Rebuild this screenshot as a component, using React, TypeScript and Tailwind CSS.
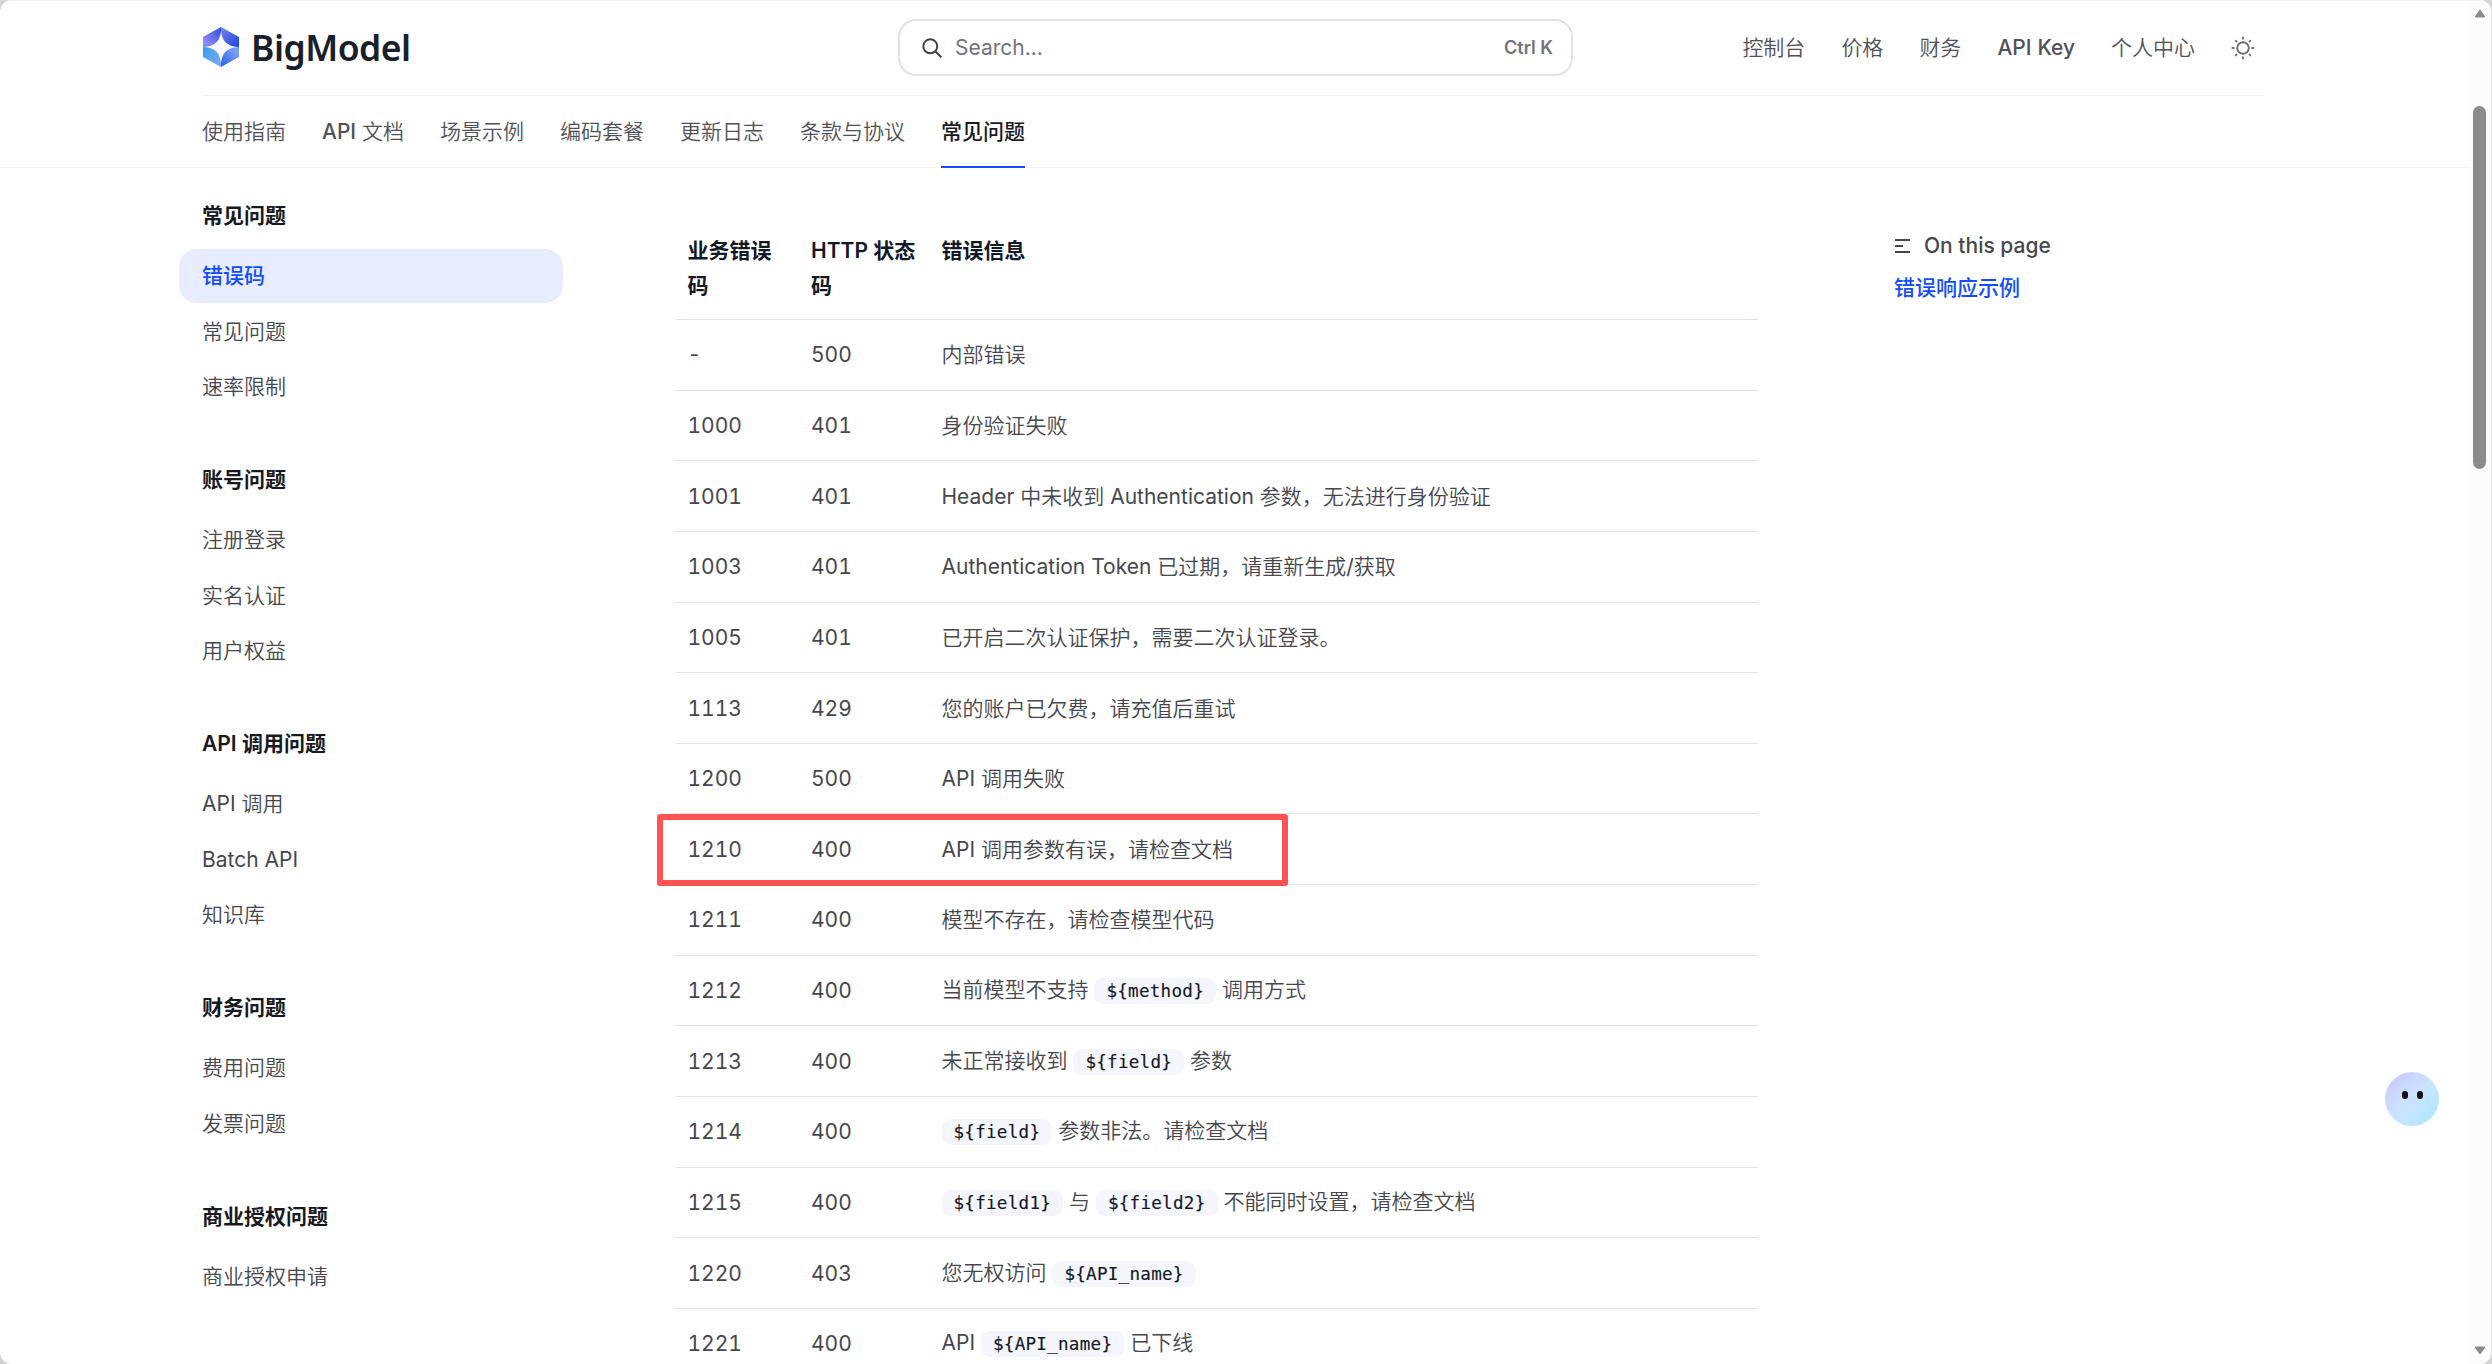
import { ReactNode } from "react";

type SidebarGroup = {
  title: string;
  items: string[];
};

type ErrorRow = {
  code: string;
  status: string;
  message: ReactNode;
};

const topLinks = ["控制台", "价格", "财务", "API Key", "个人中心"];

const tabs = ["使用指南", "API 文档", "场景示例", "编码套餐", "更新日志", "条款与协议", "常见问题"];

const sidebarGroups: SidebarGroup[] = [
  { title: "常见问题", items: ["错误码", "常见问题", "速率限制"] },
  { title: "账号问题", items: ["注册登录", "实名认证", "用户权益"] },
  { title: "API 调用问题", items: ["API 调用", "Batch API", "知识库"] },
  { title: "财务问题", items: ["费用问题", "发票问题"] },
  { title: "商业授权问题", items: ["商业授权申请"] }
];

const errorRows: ErrorRow[] = [
  { code: "-", status: "500", message: "内部错误" },
  { code: "1000", status: "401", message: "身份验证失败" },
  { code: "1001", status: "401", message: "Header 中未收到 Authentication 参数，无法进行身份验证" },
  { code: "1003", status: "401", message: "Authentication Token 已过期，请重新生成/获取" },
  { code: "1005", status: "401", message: "已开启二次认证保护，需要二次认证登录。" },
  { code: "1113", status: "429", message: "您的账户已欠费，请充值后重试" },
  { code: "1200", status: "500", message: "API 调用失败" },
  { code: "1210", status: "400", message: "API 调用参数有误，请检查文档" },
  { code: "1211", status: "400", message: "模型不存在，请检查模型代码" },
  { code: "1212", status: "400", message: <>当前模型不支持 <Code>{"${method}"}</Code> 调用方式</> },
  { code: "1213", status: "400", message: <>未正常接收到 <Code>{"${field}"}</Code> 参数</> },
  { code: "1214", status: "400", message: <><Code>{"${field}"}</Code> 参数非法。请检查文档</> },
  { code: "1215", status: "400", message: <><Code>{"${field1}"}</Code> 与 <Code>{"${field2}"}</Code> 不能同时设置，请检查文档</> },
  { code: "1220", status: "403", message: <>您无权访问 <Code>{"${API_name}"}</Code></> },
  { code: "1221", status: "400", message: <>API <Code>{"${API_name}"}</Code> 已下线</> }
];

function Code({ children }: { children: ReactNode }) {
  return (
    <code className="rounded-[9px] bg-[#f5f6fb] px-3 py-[3px] font-['DejaVu_Sans_Mono','Liberation_Mono',monospace] text-[17.6px] tracking-[0.25px] text-[#111827] [-webkit-text-stroke:0.15px_#111827]">
      {children}
    </code>
  );
}

// Latin words in the nav are medium, Chinese ones stay regular
function NavLabel({ text }: { text: string }) {
  return (
    <span className="whitespace-pre">
      {text.split(/([A-Za-z]+)/).map((part, index) =>
        index % 2 === 1 ? (
          <span className="font-medium" key={index}>{part}</span>
        ) : (
          part
        )
      )}
    </span>
  );
}

function Logo() {
  return (
    <div className="-mt-0.5 flex items-center gap-[12px]">
      <svg className="h-10 w-[36px]" viewBox="0 0 37 40" preserveAspectRatio="none">
        <defs>
          <linearGradient id="logo-tl" x1="0" x2="1" y1="1" y2="0">
            <stop offset="0.2" stopColor="#8f86f8" />
            <stop offset="1" stopColor="#2450dc" />
          </linearGradient>
          <linearGradient id="logo-tr" x1="0" x2="1" y1="0" y2="1">
            <stop offset="0" stopColor="#8280f4" />
            <stop offset="1" stopColor="#1747d8" />
          </linearGradient>
          <linearGradient id="logo-bl" x1="0" x2="1" y1="0" y2="1">
            <stop offset="0" stopColor="#36a0e6" />
            <stop offset="1" stopColor="#80aaf9" />
          </linearGradient>
          <linearGradient id="logo-br" x1="1" x2="0" y1="0" y2="1">
            <stop offset="0.2" stopColor="#7c9efb" />
            <stop offset="1" stopColor="#2562e0" />
          </linearGradient>
        </defs>
        <path d="M18.500 0 0 10v10h18.500z" fill="url(#logo-tl)" />
        <path d="M18.500 0 37 10v10H18.500z" fill="url(#logo-tr)" />
        <path d="M0 20v10l18.500 10V20z" fill="url(#logo-bl)" />
        <path d="M37 20v10L18.500 40V20z" fill="url(#logo-br)" />
        <path d="M18.500 4C19.500 13 24 19.500 36 20C24 20.500 19.500 27 18.500 36C17.500 27 13 20.500 1 20C13 19.500 17.500 13 18.500 4z" fill="#f7f9ff" />
      </svg>
      <span className="font-['Noto_Sans',sans-serif] text-[35.500px] font-semibold leading-10 tracking-[-0.500px] text-[#18202b]">BigModel</span>
    </div>
  );
}

function SearchBar() {
  return (
    <div className="flex h-[57px] w-[675px] items-center rounded-[18px] border-2 border-[#e2e3e5] bg-white pl-[22px] pr-[18px]">
      <svg className="size-5" viewBox="0 0 20 20" fill="none" stroke="#3f4046" strokeWidth="2" strokeLinecap="round">
        <circle cx="8.300" cy="8.300" r="7" />
        <path d="m13.400 13.400 5.400 5.400" />
      </svg>
      <span className="ml-[13px] flex-1 text-[21px] text-[#71747a]">Search...</span>
      <span className="text-[18px] font-semibold text-[#71747a]">Ctrl K</span>
    </div>
  );
}

function SunIcon() {
  return (
    <svg className="size-6" viewBox="0 0 24 24" fill="none" stroke="#6b6d73" strokeWidth="1.900" strokeLinecap="round">
      <circle cx="12" cy="12" r="5.800" />
      <path d="M12 1.500v1.300M12 21.200v1.300M1.500 12h1.300M21.200 12h1.300M4.700 4.700l.7.700M18.600 18.600l.7.700M4.700 19.300l.7-.7M18.600 5.400l.7-.7" />
    </svg>
  );
}

function Header() {
  return (
    <header className="border-b border-[#f3f4f5] px-[203px]">
      <div className="flex h-24 items-center justify-between border-b border-[#f3f4f5]">
        <div className="w-[695px]">
          <Logo />
        </div>
        <SearchBar />
        <nav className="flex flex-1 items-center justify-end gap-9 pr-[10px] text-[21px] text-[#505158]">
          {topLinks.map((link) => (
            <a key={link}>
              <NavLabel text={link} />
            </a>
          ))}
          <SunIcon />
        </nav>
      </div>
      <nav className="-ml-px flex h-[71px] gap-9 text-[21px] text-[#505158]">
        {tabs.map((tab) =>
          tab === "常见问题" ? (
            <a className="relative flex items-center font-['Inter','Noto_Sans_CJK_SC',sans-serif] font-medium text-[#18191f]" key={tab}>
              {tab}
              <span className="absolute -bottom-px left-0 h-[2px] w-full bg-[#134cff]" />
            </a>
          ) : (
            <a className="flex items-center" key={tab}>
              <NavLabel text={tab} />
            </a>
          )
        )}
      </nav>
    </header>
  );
}

function Sidebar() {
  return (
    <aside className="w-[384px] shrink-0 pt-[27px]">
      {sidebarGroups.map((group) => (
        <div className="mb-[45px]" key={group.title}>
          <h5 className="mb-3 h-[42px] pl-[23px] font-['Inter','Noto_Sans_CJK_SC',sans-serif] text-[21px] font-semibold leading-[42px] text-[#18191f]">{group.title}</h5>
          <ul className="flex flex-col gap-[1.500px]">
            {group.items.map((item) => (
              <li
                className={
                  item === "错误码"
                    ? "h-[54px] rounded-[18px] bg-[#e7ecff] pl-[23px] font-['Inter','Noto_Sans_CJK_SC',sans-serif] text-[21px] font-medium leading-[54px] text-[#134cff]"
                    : "h-[54px] pl-[23px] text-[21px] leading-[54px] text-[#46474e]"
                }
                key={item}
              >
                {item}
              </li>
            ))}
          </ul>
        </div>
      ))}
    </aside>
  );
}

function ErrorTable() {
  return (
    <div className="w-[1083px] shrink-0 pt-[65px] text-[21px] leading-[35px]">
      <div className="flex h-[87px] border-b border-[#dfe2e8] font-['Inter','Noto_Sans_CJK_SC',sans-serif] font-semibold text-[#111827]">
        <div className="w-[124px] pl-[12.500px] pr-3">业务错误码</div>
        <div className="w-[130px] pl-3 pr-3">HTTP 状态码</div>
        <div className="flex-1 pl-[12.500px]">错误信息</div>
      </div>
      {errorRows.map((row) => (
        <div className="relative flex h-[70.650px] items-center border-b border-[#e2e4e9] text-[#46474e]" key={row.code}>
          <div className="w-[124px] pl-[12.500px] tabular-nums">{row.code}</div>
          <div className="w-[130px] pl-3 tabular-nums">{row.status}</div>
          <div className="flex-1 pl-[12.500px]">{row.message}</div>
          {row.code === "1210" && (
            <span className="absolute -left-[18px] top-0 h-[72px] w-[631px] rounded-[3px] border-[6px] border-[#ff5252]" />
          )}
        </div>
      ))}
    </div>
  );
}

function OnThisPage() {
  return (
    <aside className="ml-[136px] pt-[60px] text-[21px]">
      <div className="flex h-9 items-center gap-[13px] font-medium text-[#46474e]">
        <svg className="h-4 w-[17px]" viewBox="0 0 17 16" fill="none" stroke="#46474e" strokeWidth="2">
          <path d="M1 2h15M1 8h8M1 14h15" />
        </svg>
        On this page
      </div>
      <a className="mt-1.5 block h-9 font-['Inter','Noto_Sans_CJK_SC',sans-serif] font-medium leading-9 text-[#134cff]">错误响应示例</a>
    </aside>
  );
}

function Scrollbar() {
  return (
    <div className="flex w-[23px] flex-col items-center bg-[#fcfcfc] pb-[9px] pt-[9px]">
      <svg className="h-[9px] w-3" viewBox="0 0 12 9">
        <path d="M6 1 11 8H1z" fill="#8b8b8b" stroke="#8b8b8b" strokeLinejoin="round" />
      </svg>
      <div className="mt-[88px] h-[363px] w-[13px] rounded-full bg-[#8b8b8b]" />
      <svg className="mt-auto h-[9px] w-3" viewBox="0 0 12 9">
        <path d="M1 1h10L6 8z" fill="#8b8b8b" stroke="#8b8b8b" strokeLinejoin="round" />
      </svg>
    </div>
  );
}

export default function App() {
  return (
    <div className="h-[1364px] w-[2492px] overflow-hidden bg-[#d4d4d4] font-['Inter','Noto_Sans_CJK_SC_DemiLight','Noto_Sans_CJK_SC',sans-serif]">
      <div className="relative flex h-full overflow-hidden rounded-[12px] border-r border-[#e4e4e4] bg-white">
        <div className="flex-1 overflow-hidden">
          <Header />
          <main className="flex pl-[179px]">
            <Sidebar />
            <div className="w-28 shrink-0" />
            <ErrorTable />
            <OnThisPage />
          </main>
        </div>
        <Scrollbar />
        <div className="absolute inset-x-0 top-0 h-px bg-[#f3f3f3]" />
        <div className="absolute right-[52px] top-[1072px] flex h-[54px] w-[54px] justify-center gap-[9px] rounded-full bg-linear-to-br from-[#c9c6ff] via-[#cbe3ff] to-[#a8e8ff] pt-[19px]">
          <span className="h-2 w-1.5 rounded-full bg-[#111]" />
          <span className="h-2 w-1.5 rounded-full bg-[#111]" />
        </div>
      </div>
    </div>
  );
}
